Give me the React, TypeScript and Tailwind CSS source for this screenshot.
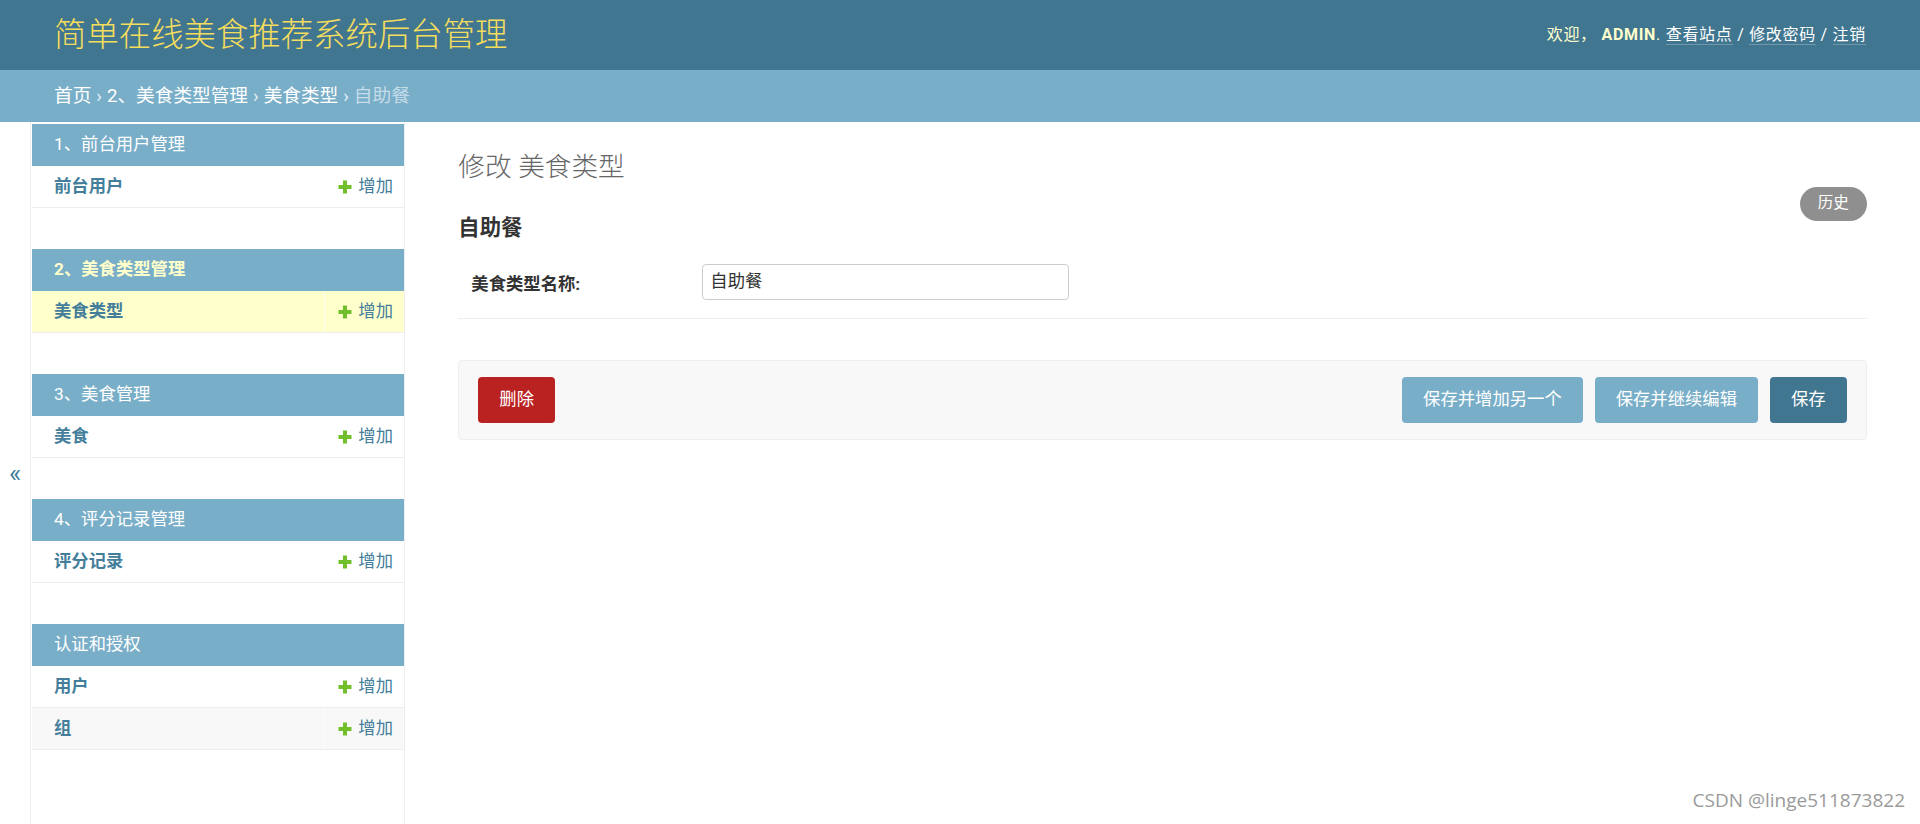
import React from "react";

type Module = { caption: string; rows: string[]; current?: boolean };

const MODULES: Module[] = [
  { caption: "1、前台用户管理", rows: ["前台用户"] },
  { caption: "2、美食类型管理", rows: ["美食类型"], current: true },
  { caption: "3、美食管理", rows: ["美食"] },
  { caption: "4、评分记录管理", rows: ["评分记录"] },
  { caption: "认证和授权", rows: ["用户", "组"] },
];

function AddIcon() {
  return (
    <svg width="14" height="14" viewBox="0 0 14 14" className="shrink-0">
      <path fill="#70bf2b" d="M5 0.5h4v4.5h4.5v4H9v4.5H5V9H0.5V5H5z" />
    </svg>
  );
}

function Sidebar() {
  return (
    <div className="flex shrink-0">
      <button className="w-[31px] border-r border-[#eee] flex items-center justify-center text-[26px] leading-none text-[#447e9b] bg-white">
        «
      </button>
      <nav className="w-[374px] pl-[1px] pt-[2px] border-r border-[#eee]">
        {MODULES.map((m) => (
          <div key={m.caption} className="mb-[41px]">
            <div
              className={`h-[42px] flex items-center pl-[22px] bg-[#79aec8] text-[17.33px] ${
                m.current ? "text-[#ffc] font-bold" : "text-white"
              }`}
            >
              {m.caption}
            </div>
            {m.rows.map((r, i) => (
              <div
                key={r}
                className={`h-[42px] flex border-b border-[#eee] ${
                  m.current ? "bg-[#ffc]" : i % 2 === 1 ? "bg-[#f8f8f8]" : "bg-white"
                }`}
              >
                <a className="flex-1 flex items-center pl-[22px] text-[17.33px] font-bold text-[#447e9b]">{r}</a>
                <a className="w-[80px] border-l border-white/70 flex items-center justify-end gap-[6px] pr-[11px] text-[17.33px] text-[#447e9b]">
                  <AddIcon />
                  增加
                </a>
              </div>
            ))}
          </div>
        ))}
      </nav>
    </div>
  );
}

function Content() {
  return (
    <main className="flex-1 px-[53.33px] pt-[26.67px]">
      <h1 className="text-[26.67px] leading-[36px] font-light text-[#666]">修改 美食类型</h1>
      <div className="flex justify-between items-start mt-[2px]">
        <h2 className="mt-[27px] text-[21.33px] leading-[28px] font-bold text-[#333]">自助餐</h2>
        <a className="h-[34px] px-[18px] flex items-center rounded-full bg-[#8f8f8f] text-white text-[15.5px]">历史</a>
      </div>
      <div className="mt-[9px] flex items-start pl-[13px] pt-[13px] pb-[18px] border-b border-[#eee]">
        <label className="w-[231px] pt-[8px] text-[17.33px] leading-[24px] font-bold text-[#333]">美食类型名称:</label>
        <div className="w-[367px] h-[36px] border border-[#ccc] rounded-[4px] px-[7px] flex items-center text-[17.33px] text-[#333]">
          自助餐
        </div>
      </div>
      <div className="mt-[41px] flex justify-between items-center bg-[#f8f8f8] border border-[#eee] rounded-[4px] px-[19px] py-[16px]">
        <a className="h-[46px] px-[21px] flex items-center rounded-[4px] bg-[#ba2121] text-white text-[17.33px]">删除</a>
        <div className="flex gap-[12px]">
          <button className="h-[46px] px-[21px] rounded-[4px] bg-[#79aec8] text-white text-[17.33px]">保存并增加另一个</button>
          <button className="h-[46px] px-[21px] rounded-[4px] bg-[#79aec8] text-white text-[17.33px]">保存并继续编辑</button>
          <button className="h-[46px] px-[21px] rounded-[4px] bg-[#417690] text-white text-[17.33px]">保存</button>
        </div>
      </div>
    </main>
  );
}

export default function App() {
  return (
    <div className="relative h-[824px] flex flex-col overflow-hidden bg-white font-['Roboto','Noto_Sans_CJK_SC',sans-serif]">
      <header className="h-[70px] shrink-0 bg-[#417690] px-[54px] flex items-center justify-between">
        <div className="text-[32.4px] font-light text-[#f5dd5d] leading-none">简单在线美食推荐系统后台管理</div>
        <div className="text-[16px] tracking-[0.7px] text-[#ffc] leading-[24px]">
          欢迎， <strong className="font-bold">ADMIN</strong>.{" "}
          <a className="text-white border-b border-white/25">查看站点</a>
          <span className="text-white"> / </span>
          <a className="text-white border-b border-white/25">修改密码</a>
          <span className="text-white"> / </span>
          <a className="text-white border-b border-white/25">注销</a>
        </div>
      </header>
      <div className="h-[52px] shrink-0 bg-[#79aec8] px-[54px] flex items-center text-[18.67px] text-white">
        <a>首页</a>
        <span className="mx-[5px] text-white/80">›</span>
        <a>2、美食类型管理</a>
        <span className="mx-[5px] text-white/80">›</span>
        <a>美食类型</a>
        <span className="mx-[5px] text-white/80">›</span>
        <span className="text-[#c4dce8]">自助餐</span>
      </div>
      <div className="flex flex-1">
        <Sidebar />
        <Content />
      </div>
      <div className="absolute right-[15px] bottom-[10px] font-['Open_Sans',sans-serif] text-[19px] text-[#9a9a9a]">
        CSDN @linge511873822
      </div>
    </div>
  );
}
